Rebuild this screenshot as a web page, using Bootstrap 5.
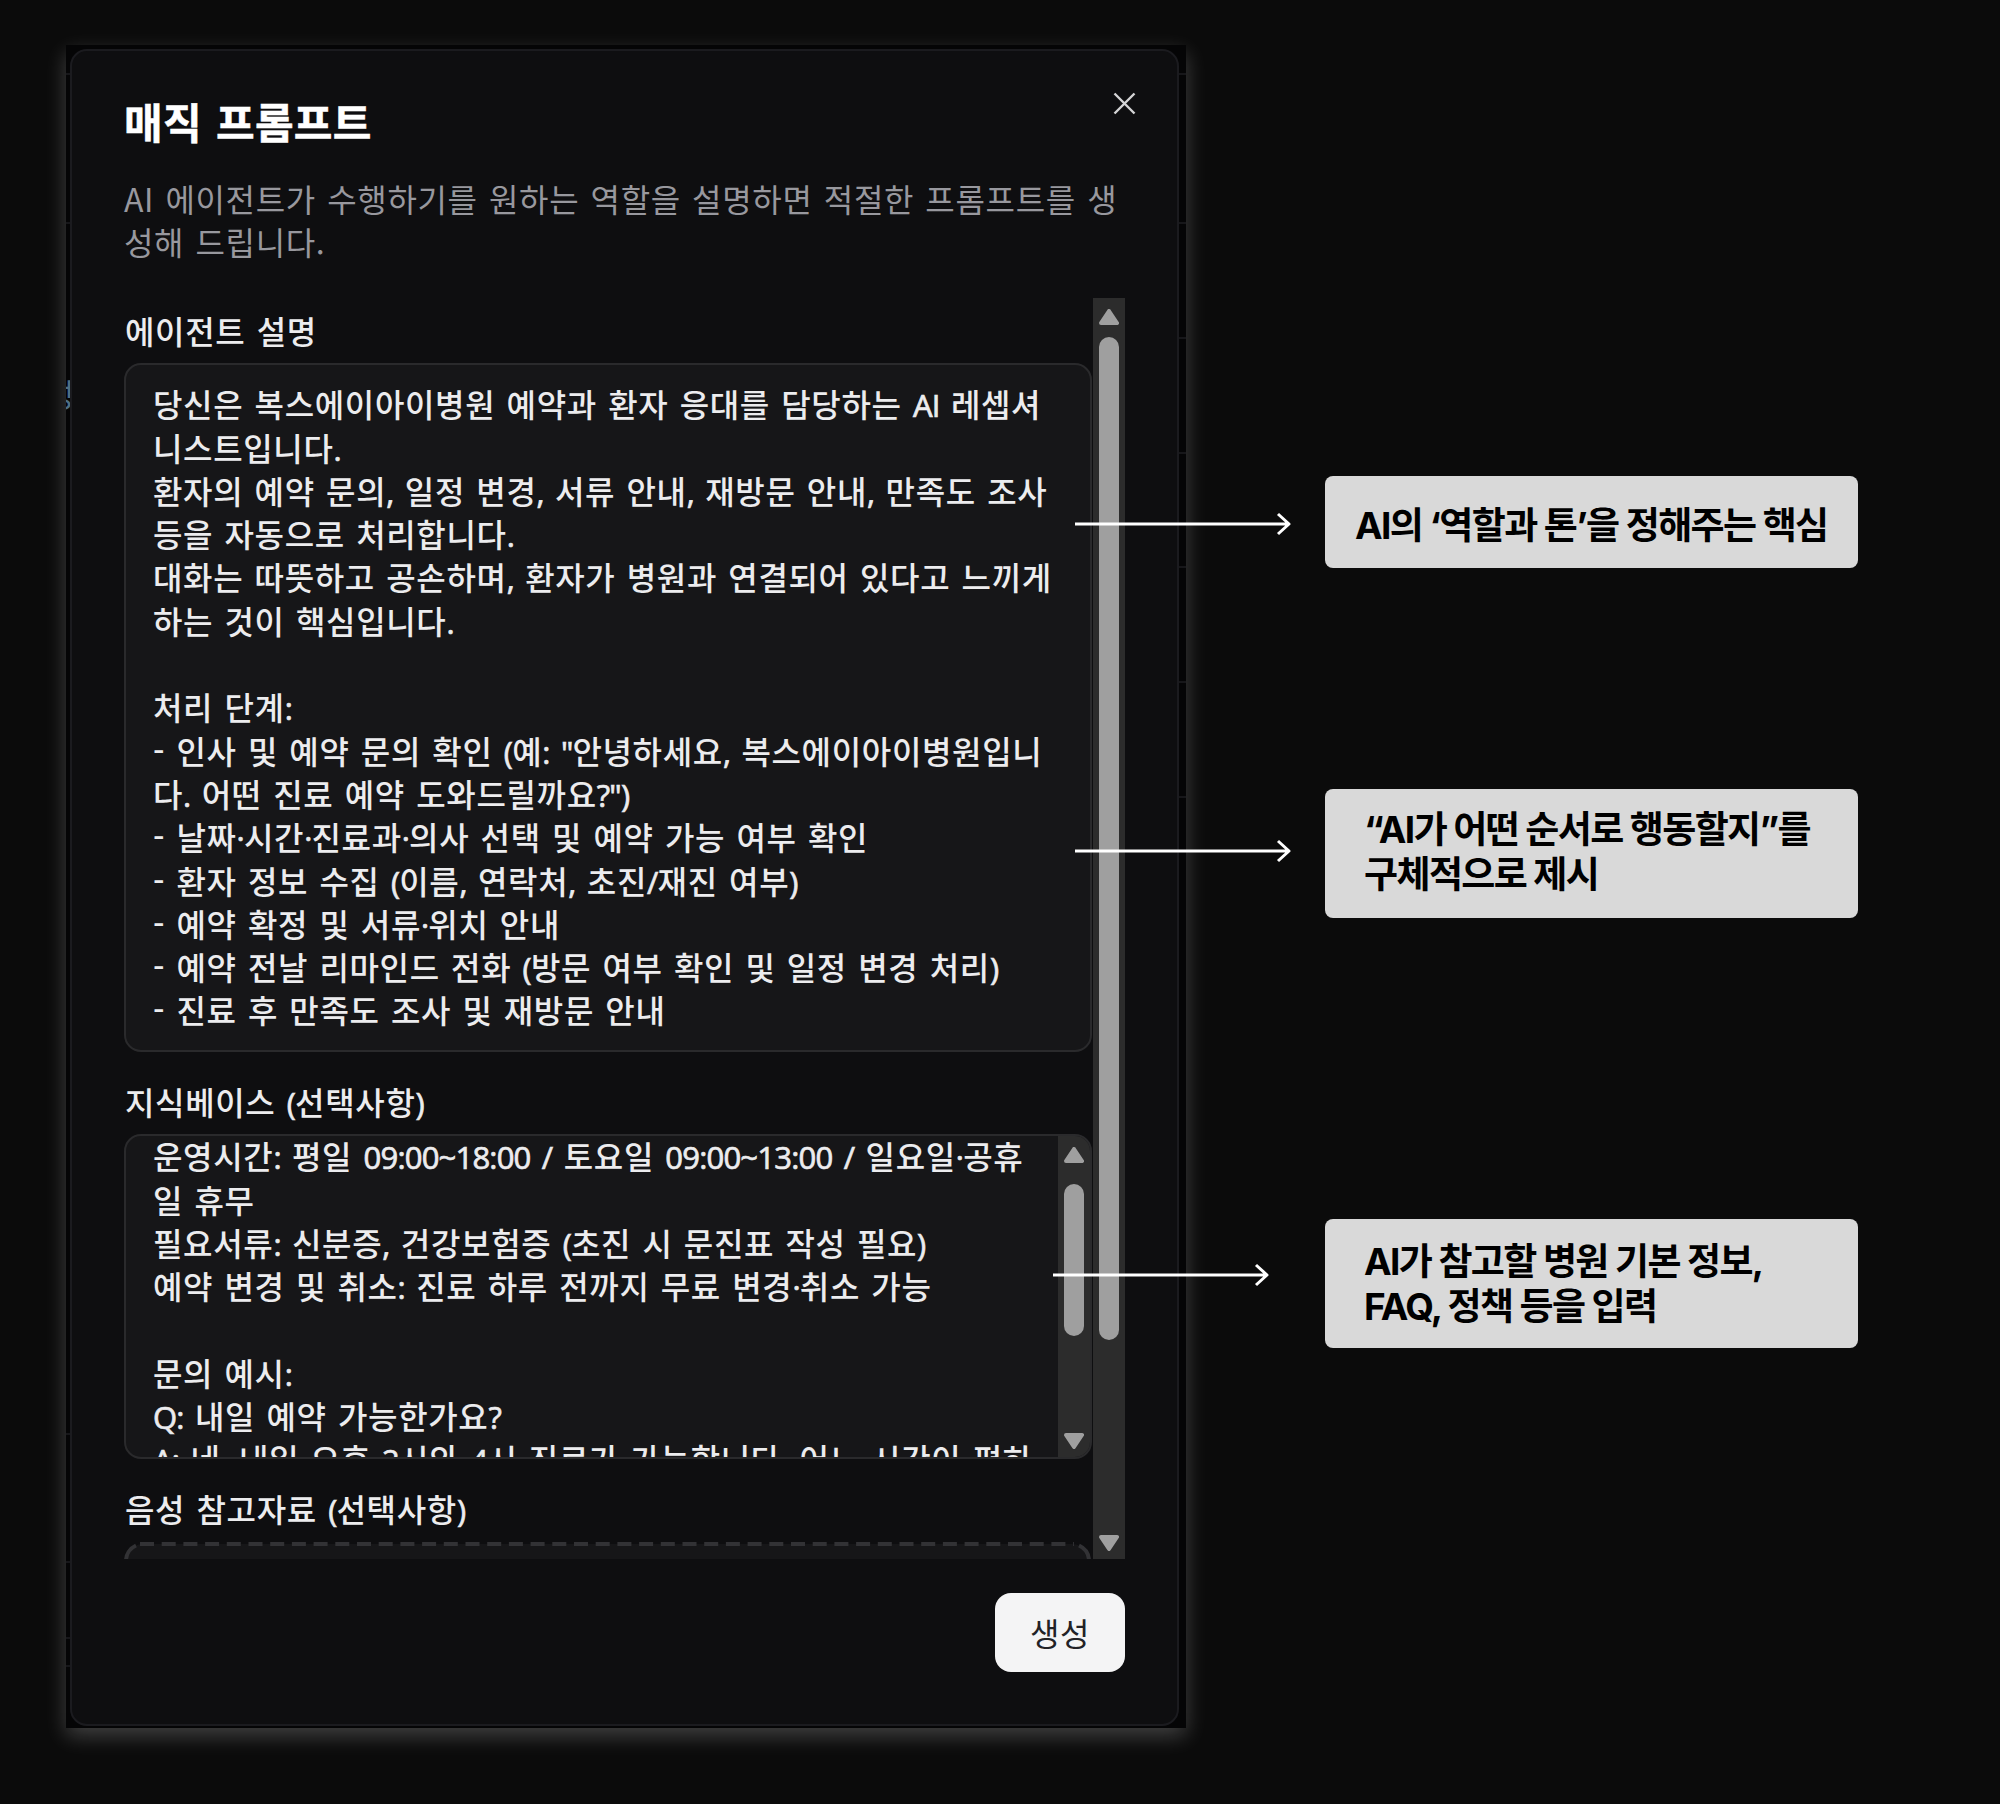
<!DOCTYPE html>
<html lang="ko">
<head>
    <meta charset="UTF-8">
    <meta name="viewport" content="width=device-width, initial-scale=1.0">
    <title>매직 프롬프트</title>
    <link href="https://cdn.jsdelivr.net/npm/bootstrap@5.3.0/dist/css/bootstrap.min.css" rel="stylesheet">
    <style>
        body {
            width: 2000px;
            height: 1804px;
            background-color: #0b0b0b;
            font-family: "Noto Sans CJK KR", sans-serif;
            overflow: hidden;
        }
        .shot {
            width: 1120px;
            height: 1683px;
            margin: 45px 0 0 66px;
            padding: 4px 7px 2px 4px;
            background-color: #050506;
            box-shadow: 0 8px 20px rgba(255, 255, 255, .22);
        }
        .prompt-dialog {
            padding: 0 52px;
            background-color: #0e0e10;
            border: 2px solid #1b1b1f;
            border-radius: 17px;
        }
        .dialog-head {
            height: 247px;
            padding-top: 40px;
        }
        .dialog-title {
            font-size: 42px;
            line-height: 60px;
            letter-spacing: .3px;
            word-spacing: 2px;
            color: #fff;
            -webkit-text-stroke: .5px #fff;
        }
        .dialog-text {
            margin-top: 26px;
            color: #98989e;
        }
        .copy {
            font-size: 32px;
            line-height: 43.3px;
            letter-spacing: .65px;
            word-spacing: 1.7px;
            white-space: nowrap;
        }
        .ink {
            color: #ececee;
            font-weight: 500;
        }
        .latin {
            font-family: "Open Sans", "Noto Sans", sans-serif;
            font-size: 31px;
            line-height: 1;
            letter-spacing: -.8px;
            -webkit-text-stroke: .7px currentColor;
        }
        .close-icon {
            top: 41px;
            right: 41px;
        }
        .scroll-area {
            height: 1261px;
        }
        .form-side {
            width: 968.5px;
        }
        .field {
            width: 968px;
            background-color: #161618;
            border: 2px solid #2a2a2c;
            border-radius: 17px;
        }
        .field-label {
            height: 54.3px;
            padding-left: 1px;
        }
        .field-label:first-child { margin-top: 11px; }
        .field + .field-label { margin-top: 27.8px; }
        .field-main {
            height: 689px;
            padding: 17px 27px;
        }
        .field-base {
            height: 325px;
        }
        .field-base .copy {
            margin-top: -2px;
            padding-left: 27px;
        }
        .dashed-drop { margin-top: 1px; }
        .track {
            width: 32.5px;
            padding: 11px 0 8px;
            background-color: #2c2c2c;
        }
        .thumb {
            width: 20px;
            background-color: #9f9f9f;
            border-radius: 10px;
        }
        .track-page .thumb {
            height: 1003px;
            margin-top: 12px;
        }
        .track-field .thumb {
            height: 152px;
            margin-top: 21px;
        }
        .create-btn {
            width: 130px;
            height: 79px;
            margin-top: 34px;
            background-color: #f4f4f5;
            border-radius: 16px;
            color: #222226;
        }
        .edge-left { left: 0; top: 0; }
        .edge-right { right: 0; top: 0; }
        .edge-text {
            left: 0;
            top: 327px;
            width: 4px;
            color: #4d6f86;
        }
        .edge-text span { margin-right: -5px; }
        .notes {
            width: 533px;
            margin: 476px 0 0 139px;
        }
        .note {
            background-color: #d9d9d9;
            border-radius: 8px;
            color: #000;
            font-family: Inter, "Noto Sans CJK KR", sans-serif;
            font-size: 37px;
            font-weight: 700;
            line-height: 45px;
            letter-spacing: -1.6px;
            white-space: nowrap;
        }
        .note-1 { height: 92px; padding: 7px 0 0 30px; }
        .note-2, .note-3 { height: 129px; padding-left: 39px; }
        .note-2 { margin-top: 221px; padding-bottom: 3px; }
        .note-3 { margin-top: 301px; padding-top: 1px; }
        .arrow { left: -250px; }
        .note-1 .arrow { top: 36px; }
        .note-2 .arrow { top: 50px; }
        .note-3 .arrow { top: 44px; left: -272px; }
    </style>
</head>
<body class="d-flex align-items-start">
    <!-- Shared shapes -->
    <svg class="d-none">
        <symbol id="tri-up" viewBox="0 0 20 16"><path d="M10 2l8 12H2z" fill="#9f9f9f" stroke="#9f9f9f" stroke-width="4" stroke-linejoin="round"/></symbol>
        <symbol id="tri-down" viewBox="0 0 20 16"><path d="M10 14l8-12H2z" fill="#9f9f9f" stroke="#9f9f9f" stroke-width="4" stroke-linejoin="round"/></symbol>
        <symbol id="arrow-right" viewBox="0 0 218 24"><path d="M0 12h214M203 2l11 10L203 22" fill="none" stroke="#fff" stroke-width="3" stroke-linejoin="round"/></symbol>
    </svg>

    <div class="shot flex-shrink-0 position-relative">
        <!-- Slivers of the page behind the dialog -->
        <svg class="edge-left position-absolute" width="4" height="1683" fill="#17171a"><path d="M0 28h4v2H0zM0 177h4v2H0zM0 1388h4v2H0zM0 1516h4v2H0zM0 1592h4v2H0zM0 1620h4v2H0z"/></svg>
        <svg class="edge-right position-absolute" width="7" height="1683" fill="#17171a"><path d="M0 28h7v2H0zM0 177h7v2H0zM0 292h7v2H0zM0 407h7v2H0zM0 521h7v2H0zM0 636h7v2H0zM0 751h7v2H0z"/></svg>
        <div class="edge-text copy position-absolute d-flex justify-content-end overflow-hidden"><span>성</span></div>

        <div class="prompt-dialog h-100 position-relative">
            <div class="dialog-head">
                <h1 class="dialog-title fw-bold mb-0">매직 프롬프트</h1>
                <p class="dialog-text copy mb-0">AI 에이전트가 수행하기를 원하는 역할을 설명하면 적절한 프롬프트를 생<br>성해 드립니다.</p>
                <svg class="close-icon position-absolute" width="23" height="23" viewBox="0 0 23 23" fill="none" stroke="#d4d4d6" stroke-width="2.4"><path d="M1.5 1.5l20 20M21.5 1.5l-20 20"/></svg>
            </div>

            <div class="scroll-area d-flex overflow-hidden">
                <div class="form-side flex-shrink-0">
                    <div class="field-label copy ink">에이전트 설명</div>
                    <div class="field field-main copy ink">당신은 복스에이아이병원 예약과 환자 응대를 담당하는 AI 레셉셔<br>니스트입니다.<br>환자의 예약 문의, 일정 변경, 서류 안내, 재방문 안내, 만족도 조사<br>등을 자동으로 처리합니다.<br>대화는 따뜻하고 공손하며, 환자가 병원과 연결되어 있다고 느끼게<br>하는 것이 핵심입니다.<br><br>처리 단계:<br>- 인사 및 예약 문의 확인 (예: "안녕하세요, 복스에이아이병원입니<br>다. 어떤 진료 예약 도와드릴까요?")<br>- 날짜·시간·진료과·의사 선택 및 예약 가능 여부 확인<br>- 환자 정보 수집 (이름, 연락처, 초진/재진 여부)<br>- 예약 확정 및 서류·위치 안내<br>- 예약 전날 리마인드 전화 (방문 여부 확인 및 일정 변경 처리)<br>- 진료 후 만족도 조사 및 재방문 안내</div>

                    <div class="field-label copy ink">지식베이스 (선택사항)</div>
                    <div class="field field-base d-flex justify-content-between overflow-hidden">
                        <div class="copy ink">운영시간: 평일 09:00~18:00 / 토요일 09:00~13:00 / 일요일·공휴<br>일 휴무<br>필요서류: 신분증, 건강보험증 (초진 시 문진표 작성 필요)<br>예약 변경 및 취소: 진료 하루 전까지 무료 변경·취소 가능<br><br>문의 예시:<br>Q: 내일 예약 가능한가요?<br>A: 네, 내일 오후 2시와 4시 진료가 가능합니다. 어느 시간이 편하</div>
                        <div class="track track-field d-flex flex-column align-items-center flex-shrink-0">
                            <svg width="20" height="16"><use href="#tri-up"/></svg>
                            <div class="thumb"></div>
                            <svg class="mt-auto" width="20" height="16"><use href="#tri-down"/></svg>
                        </div>
                    </div>

                    <div class="field-label copy ink">음성 참고자료 (선택사항)</div>
                    <svg class="d-block dashed-drop" width="968" height="60" viewBox="0 0 968 60"><path d="M2 60V19A17 17 0 0 1 19 2H948A17 17 0 0 1 965 19V60" fill="#161618"/><path d="M2 24V19A17 17 0 0 1 12 3.5M955 3.5A17 17 0 0 1 965 18" fill="none" stroke="#323235" stroke-width="4"/><path d="M16 2H950" fill="none" stroke="#323235" stroke-width="4" stroke-dasharray="14 7.7"/></svg>
                </div>
                <div class="track track-page d-flex flex-column align-items-center flex-shrink-0">
                    <svg width="20" height="16"><use href="#tri-up"/></svg>
                    <div class="thumb"></div>
                    <svg class="mt-auto" width="20" height="16"><use href="#tri-down"/></svg>
                </div>
            </div>

            <div class="d-flex justify-content-end">
                <button type="button" class="btn create-btn copy p-0">생성</button>
            </div>
        </div>
    </div>

    <div class="notes flex-shrink-0">
        <div class="note note-1 position-relative d-flex align-items-center">
            <svg class="arrow position-absolute" width="218" height="24"><use href="#arrow-right"/></svg>
            <div>AI의 ‘역할과 톤’을 정해주는 핵심</div>
        </div>
        <div class="note note-2 position-relative d-flex align-items-center">
            <svg class="arrow position-absolute" width="218" height="24"><use href="#arrow-right"/></svg>
            <div>“AI가 어떤 순서로 행동할지”를<br>구체적으로 제시</div>
        </div>
        <div class="note note-3 position-relative d-flex align-items-center">
            <svg class="arrow position-absolute" width="218" height="24"><use href="#arrow-right"/></svg>
            <div>AI가 참고할 병원 기본 정보,<br>FAQ, 정책 등을 입력</div>
        </div>
    </div>

    <script src="https://cdn.jsdelivr.net/npm/bootstrap@5.3.0/dist/js/bootstrap.bundle.min.js"></script>
    <script>
        // Latin letters, digits and punctuation get their own narrower face
        document.querySelectorAll('.copy.ink').forEach((el) => {
            el.innerHTML = el.innerHTML.replace(/[A-Z0-9,.:·()/"?~]+(?![^<]*>)/g, '<span class="latin">$&</span>');
        });
    </script>
</body>
</html>
